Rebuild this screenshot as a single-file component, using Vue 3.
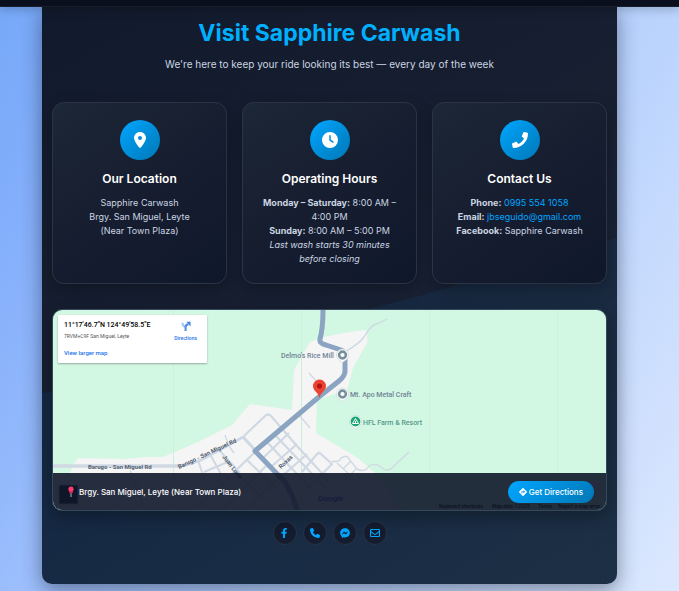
<script setup>
const phoneHref = 'tel:09955541058'
const mailHref = 'mailto:jbseguido@gmail.com'

const socials = [
  {
    label: 'Facebook',
    href: '#facebook',
    box: '0 0 320 512',
    path: 'M279.14 288l14.22-92.66h-88.91v-60.13c0-25.35 12.42-50.06 52.24-50.06h40.42V6.26S260.43 0 225.36 0c-73.22 0-121.08 44.38-121.08 124.72v70.62H22.89V288h81.39v224h100.17V288z',
  },
  {
    label: 'Phone',
    href: phoneHref,
    box: '0 0 512 512',
    path: 'M164.9 24.6c-7.7-18.6-28-28.5-47.4-23.2l-88 24C12.1 30.2 0 46 0 64C0 311.4 200.6 512 448 512c18 0 33.8-12.1 38.6-29.5l24-88c5.3-19.4-4.6-39.7-23.2-47.4l-96-40c-16.3-6.8-35.2-2.1-46.3 11.6L304.7 368C234.3 334.7 177.3 277.7 144 207.3L193.3 167c13.7-11.2 18.4-30 11.6-46.3l-40-96z',
  },
  {
    label: 'Messenger',
    href: '#messenger',
    box: '0 0 512 512',
    path: 'M256.55 8C116.52 8 8 110.34 8 248.57c0 72.3 29.71 134.78 78.07 177.94 8.35 7.51 6.63 11.86 8.05 58.23A19.92 19.92 0 0 0 122 502.31c52.91-23.3 53.59-25.14 62.56-22.7C337.85 521.8 504 423.7 504 248.57 504 110.34 396.59 8 256.55 8zm149.24 185.13l-73 115.57a37.37 37.37 0 0 1-53.91 9.93l-58.08-43.47a15 15 0 0 0-18 0l-78.37 59.44c-10.46 7.93-24.16-4.6-17.11-15.67l73-115.57a37.36 37.36 0 0 1 53.91-9.93l58.06 43.46a15 15 0 0 0 18 0l78.41-59.38c10.44-7.98 24.14 4.54 17.09 15.62z',
  },
  {
    label: 'Email',
    href: mailHref,
    box: '0 0 512 512',
    path: 'M64 48h384c35 0 64 29 64 64v288c0 35-29 64-64 64H64c-35 0-64-29-64-64V112c0-35 29-64 64-64zm-8 60v42l176 144c14 11 34 11 48 0l176-144v-42zm0 114v186h400V222L315 337c-34 28-84 28-118 0z',
  },
]
</script>

<template>
  <div class="page">
    <header class="topbar"></header>

    <main class="visit">
      <div class="intro">
        <h1>Visit Sapphire Carwash</h1>
        <p>We're here to keep your ride looking its best — every day of the week</p>
      </div>

      <section class="cards">
        <article class="card">
          <span class="badge">
            <svg viewBox="0 0 384 512" aria-hidden="true">
              <path fill-rule="evenodd" d="M215.7 499.2C267 435 384 279.4 384 192C384 86 298 0 192 0S0 86 0 192c0 87.4 117 243 168.3 307.2c12.3 15.3 35.1 15.3 47.4 0zM192 128a64 64 0 1 1 0 128 64 64 0 1 1 0-128z" />
            </svg>
          </span>
          <h2>Our Location</h2>
          <p>Sapphire Carwash<br />Brgy. San Miguel, Leyte<br />(Near Town Plaza)</p>
        </article>

        <article class="card">
          <span class="badge">
            <svg viewBox="0 0 512 512" aria-hidden="true">
              <path fill-rule="evenodd" d="M256 0a256 256 0 1 1 0 512A256 256 0 1 1 256 0zM232 120V256c0 8 4 15.5 10.7 20l96 64c11 7.4 25.9 4.4 33.3-6.7s4.4-25.9-6.7-33.3L280 243.2V120c0-13.3-10.7-24-24-24s-24 10.7-24 24z" />
            </svg>
          </span>
          <h2>Operating Hours</h2>
          <p>
            <strong>Monday – Saturday:</strong> 8:00 AM –<br />4:00 PM<br />
            <strong>Sunday:</strong> 8:00 AM – 5:00 PM<br />
            <em>Last wash starts 30 minutes<br />before closing</em>
          </p>
        </article>

        <article class="card">
          <span class="badge">
            <svg viewBox="0 0 512 512" aria-hidden="true">
              <path d="M493.4 24.6l-104-24c-11.3-2.6-22.9 3.3-27.5 13.9l-48 112c-4.2 9.8-1.4 21.3 6.9 28l60.6 49.6c-36 76.7-98.9 140.5-177.2 177.2l-49.6-60.6c-6.8-8.3-18.2-11.1-28-6.9l-112 48C3.9 366.5-2 378.1.6 389.4l24 104C27.1 504.2 36.7 512 48 512c256.1 0 464-207.5 464-464 0-11.2-7.7-20.9-18.6-23.4z" />
            </svg>
          </span>
          <h2>Contact Us</h2>
          <p>
            <strong>Phone:</strong> <a :href="phoneHref">0995 554 1058</a><br />
            <strong>Email:</strong> <a :href="mailHref">jbseguido@gmail.com</a><br />
            <strong>Facebook:</strong> Sapphire Carwash
          </p>
        </article>
      </section>

      <section class="map">
        <svg class="tiles" viewBox="53 310 553 200" preserveAspectRatio="xMidYMid slice" role="img" aria-label="Map of San Miguel, Leyte">
          <rect x="53" y="310" width="553" height="200" fill="#d2f7e2" />
          <path fill="#f5f5f5" d="M53 510V474L70 473L74 464L78 458L125 459L145 457L163 457L198 442L232 425L250 404L292 410L294 370L310 342L320 338L338 334L350 332L365 330Q368 331 367 343L353 368L347 390L317 400L316 433L358 458L375 473L400 510z" />
          <path fill="none" stroke="#cfefdd" stroke-width="1" d="M173.500 310v200M301.500 310v200M429.500 310v200M557.500 310v200" />
          <g fill="none" stroke="#d0d9e3" stroke-width="2.2" stroke-linejoin="round">
            <path stroke-width="3.600" d="M53 466H178" />
            <path stroke-width="2.600" d="M178 466Q192 465 205 458L243 437" />
            <path stroke-width="3.200" d="M243 437L256 451" />
            <path d="M243 437L265 416Q268 413 271 416L297 446L330 482" />
            <path d="M275 435L316 478L326 488M267 442L310 488" />
            <path d="M289 433L264 457M297 444L272 466M307 454L280 478M302 472L317 454Q319 452 321 454L332 464L306 490" />
            <path d="M255 452L200 505M266 466L220 512M246 459L276 488M234 470L262 498M279 478L250 506" />
            <path stroke-width="2" d="M198 460L204 478M211 456L221 474M220 451L240 473M204 472L230 461" />
            <path stroke-width="1.400" d="M225 435L229 446L234 453M300 416L310 428M309 373L317 382" />
            <path stroke-width="1.400" d="M345 352Q360 343 364 337Q370 327 374 325Q380 323 387 319M332 461Q339 463 341 458Q347 454 349 459L357 469Q365 473 369 466Q376 462 382 468Q388 473 394 466L409 452M337 463L350 475L356 469M343 469L351 461" />
            <path stroke-width="1.400" d="M130 470L145 510M140 478L110 510" />
          </g>
          <path fill="none" stroke="#8ba4c2" stroke-width="5" stroke-linejoin="round" d="M323 310Q323 328 320 339Q319 343 326 345L341 350Q345 352 345 357V371Q345 376 339 381L320 396L255 451L284 481Q290 488 298 512" />

          <g class="road" fill="#536273">
            <text x="88" y="469">Barugo - San Miguel Rd</text>
            <text transform="translate(179 469) rotate(-25)">Barugo - San Miguel Rd</text>
            <text transform="translate(281 469) rotate(-43)">Roxas</text>
            <text transform="translate(222 457) rotate(52)">Juan Luna</text>
          </g>
          <g class="place" fill="#708397">
            <text x="281" y="358">Delmo's Rice Mill</text>
            <text x="350" y="397">Mt. Apo Metal Craft</text>
            <text x="363" y="425" fill="#55998a">HFL Farm &amp; Resort</text>
          </g>
          <g fill="#fff" stroke="#c3cdd4" stroke-width="0.600">
            <path d="M342.500 362.500l-4-3a6 6 0 1 1 8 0z" />
            <path d="M342.500 401.500l-4-3a6 6 0 1 1 8 0z" />
            <path d="M355.500 429l-4-3a6 6 0 1 1 8 0z" />
          </g>
          <g fill="#fff" stroke="#78909c" stroke-width="2.600">
            <circle cx="342.500" cy="355" r="3.400" />
            <circle cx="342.500" cy="394" r="3.400" />
          </g>
          <circle cx="355.500" cy="421.500" r="4.900" fill="#18a875" />
          <path d="M352.500 423.500L355.500 418.500L358.500 423.500zM355.500 421v2.500" fill="none" stroke="#fff" />
          <path fill="#ea4335" d="M319.500 398C318.500 392 313 391 313 386a6.500 6.500 0 1 1 13 0C326 391 320.500 392 319.500 398z" />
          <circle cx="319.500" cy="386" r="2.600" fill="#b31412" />

          <rect x="59" y="485" width="19" height="19" rx="1" fill="#111" stroke="#aaa" />
          <circle cx="594" cy="489" r="8" fill="#e3dfe8" />
          <text class="brand" x="318" y="501" fill="#2348d8">Google</text>
          <g class="legal">
            <text x="439" y="508">Keyboard shortcuts</text>
            <text x="492" y="508">Map data ©2025</text>
            <text x="538" y="508">Terms</text>
            <text x="558" y="508">Report a map error</text>
          </g>
        </svg>

        <aside class="place-card">
          <div class="place-text">
            <strong>11°17'46.7"N 124°49'58.5"E</strong>
            <span>7RVM+C9F San Miguel, Leyte</span>
            <a href="#larger-map">View larger map</a>
          </div>
          <a class="route" href="#route">
            <svg viewBox="0 0 12 12" aria-hidden="true">
              <path d="M2 2V4Q2 6 5 7" fill="none" stroke="#a9c7f5" stroke-width="2.600" />
              <path d="M5.500 12V7.500Q5.500 4 9 4" fill="none" stroke="#5592e8" stroke-width="2.600" />
              <path d="M6.500 1H11.500V6.500z" fill="#4285dc" />
            </svg>
            Directions
          </a>
        </aside>

        <footer class="map-bar">
          <span class="address">
            <svg viewBox="0 0 8 12" aria-hidden="true">
              <path d="M4 6V11" stroke="#a9b7c6" stroke-width="1" />
              <path d="M2.500 4L2 7H6L5.500 4z" fill="#d81b52" />
              <circle cx="4" cy="3" r="2.600" fill="#ff3b70" />
            </svg>
            Brgy. San Miguel, Leyte (Near Town Plaza)
          </span>
          <a class="go" href="#directions">
            <svg viewBox="0 0 16 16" aria-hidden="true">
              <path fill="#fff" d="M6.900 .5Q8 -.4 9.100 .5L15.500 6.900Q16.400 8 15.500 9.100L9.100 15.500Q8 16.400 6.900 15.500L.5 9.100Q-.4 8 .5 6.900z" />
              <path d="M5.500 11V7.500H10" fill="none" stroke="#0597ee" stroke-width="1.600" />
              <path d="M9 4.500L12.300 7.500L9 10.500z" fill="#0597ee" />
            </svg>
            Get Directions
          </a>
        </footer>
      </section>

      <nav class="socials" aria-label="Social links">
        <a v-for="item in socials" :key="item.label" :href="item.href" :aria-label="item.label">
          <svg :viewBox="item.box" aria-hidden="true"><path fill-rule="evenodd" :d="item.path" /></svg>
        </a>
      </nav>
    </main>
  </div>
</template>

<style>
body {
  margin: 0;
}
</style>

<style scoped>
.page {
  box-sizing: border-box;
  min-height: 100vh;
  overflow: hidden;
  padding-bottom: 7px;
  background: linear-gradient(120deg, #76a8f8 0%, #84affb 14%, #9dbffc 36%, #b8d2fd 64%, #dce8fe 100%);
  font-family: Inter, "Open Sans", sans-serif;
  color: #cbd5e1;
}

.topbar {
  position: relative;
  z-index: 1;
  box-sizing: border-box;
  height: 7px;
  background: #090f1c;
  border-bottom: 1px solid #1a1d2a;
  box-shadow: 0 2px 10px rgba(0, 0, 0, 0.25);
}

.visit {
  position: relative;
  isolation: isolate;
  margin: 0 62px 0 42px;
  padding: 9px 10px 39px;
  border-radius: 0 0 10px 10px;
  background: linear-gradient(150deg, #111a2c, #171f31 45%, #1c2a3b);
  box-shadow: 0 6px 20px rgba(15, 23, 42, 0.45);
}

.visit::before {
  content: "";
  position: absolute;
  inset: 0;
  z-index: -1;
  border-radius: inherit;
  background: linear-gradient(100deg, rgba(10, 60, 110, 0.28), rgba(30, 70, 110, 0.2));
  clip-path: polygon(0 67%, 66% 50%, 100% 40%, 100% 100%, 0 100%);
}

.intro {
  margin-bottom: 29px;
  text-align: center;
}

h1 {
  margin: 0 0 5px;
  color: #00b0ff;
  font-size: 23px;
  font-weight: 700;
  line-height: 34px;
}

.intro p {
  margin: 0;
  font-size: 10px;
  line-height: 18px;
}

.cards {
  display: grid;
  grid-template-columns: repeat(3, 1fr);
  gap: 15px;
  margin-bottom: 25px;
}

.card {
  padding: 17px 10px;
  border: 1px solid #2c3443;
  border-radius: 12px;
  background: linear-gradient(145deg, #1c2737, #171e30 45%, #0f172b);
  box-shadow: 0 6px 16px rgba(0, 0, 0, 0.25);
  text-align: center;
}

.badge {
  display: flex;
  align-items: center;
  justify-content: center;
  width: 40px;
  height: 40px;
  margin: 0 auto 10px;
  border-radius: 50%;
  background: linear-gradient(135deg, #00a6ff, #0077b6);
}

.badge svg {
  height: 16px;
  fill: #fff;
}

h2 {
  margin: 0 0 8px;
  color: #fff;
  font-size: 12px;
  font-weight: 600;
  line-height: 18px;
}

.card p {
  margin: 0;
  font-size: 9px;
  line-height: 14px;
  white-space: nowrap;
}

.card a {
  color: #00a6ff;
  text-decoration: none;
}

.map {
  position: relative;
  display: flex;
  flex-direction: column;
  justify-content: flex-end;
  height: 200px;
  overflow: hidden;
  border: 1px solid #34495a;
  border-radius: 10px;
  box-shadow: 0 6px 16px rgba(0, 0, 0, 0.3);
}

.tiles {
  position: absolute;
  inset: 0;
  width: 100%;
  height: 100%;
}

.tiles text {
  font-family: Roboto, sans-serif;
}

.road text {
  font-size: 6px;
  font-weight: 700;
}

.place text {
  font-size: 7px;
  font-weight: 500;
}

.tiles .brand {
  font-size: 8px;
  font-weight: 500;
}

.legal text {
  font-size: 5px;
  font-weight: 700;
}

.place-card {
  position: absolute;
  top: 5px;
  left: 5px;
  display: flex;
  justify-content: space-between;
  box-sizing: border-box;
  width: 149px;
  padding: 5px 10px 4px 6px;
  border-radius: 1px;
  background: #fff;
  box-shadow: 0 1px 2px rgba(0, 0, 0, 0.3);
  font-family: Roboto, sans-serif;
  font-size: 5px;
  white-space: nowrap;
}

.place-card a {
  color: #1a73e8;
  font-weight: 500;
  text-decoration: none;
}

.place-text {
  display: flex;
  flex-direction: column;
}

.place-text strong {
  color: #000;
  font-size: 7px;
  font-weight: 500;
  line-height: 10px;
}

.place-text span {
  color: #555;
  line-height: 12px;
}

.place-text a {
  margin-top: 5px;
  font-size: 6px;
  line-height: 12px;
}

.route {
  display: flex;
  flex-direction: column;
  align-items: center;
  line-height: 12px;
}

.route svg {
  width: 10px;
  height: 12px;
}

.map-bar {
  position: relative;
  display: flex;
  align-items: center;
  justify-content: space-between;
  height: 37px;
  padding: 0 12px 0 14px;
  background: rgba(15, 23, 42, 0.9);
  color: #fff;
}

.address {
  display: flex;
  align-items: center;
  gap: 4px;
  font-size: 8px;
  font-weight: 500;
}

.address svg {
  width: 8px;
  height: 12px;
}

.go {
  display: flex;
  align-items: center;
  gap: 2px;
  padding: 0 11px;
  border-radius: 11px;
  background: linear-gradient(135deg, #00a6ff, #0077b6);
  color: #fff;
  font-size: 8px;
  font-weight: 500;
  line-height: 22px;
  text-decoration: none;
}

.go svg {
  width: 8px;
  height: 8px;
}

.socials {
  display: flex;
  justify-content: center;
  gap: 6px;
  margin-top: 10px;
}

.socials a {
  display: flex;
  align-items: center;
  justify-content: center;
  box-sizing: border-box;
  width: 24px;
  height: 24px;
  border: 1px solid #2a3445;
  border-radius: 50%;
  background: #141c2f;
}

.socials svg {
  height: 10px;
  fill: #00a6ff;
}
</style>
